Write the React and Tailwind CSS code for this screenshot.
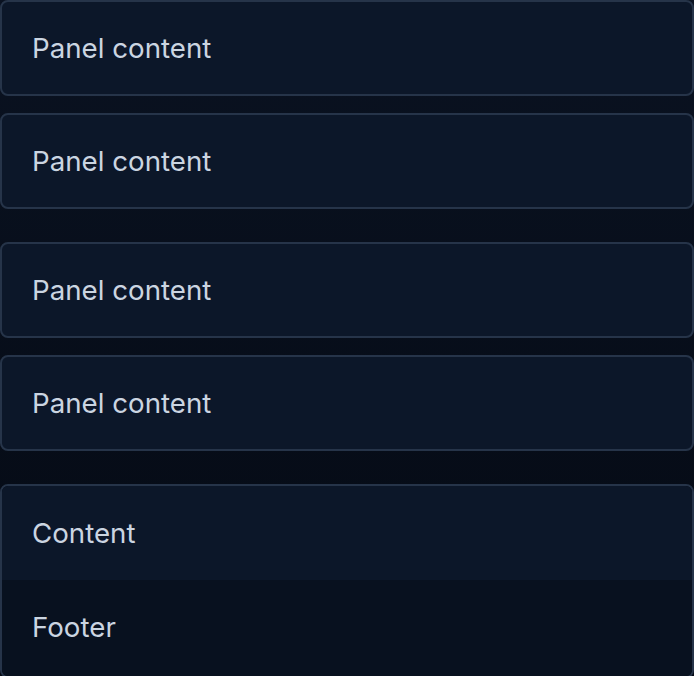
import React from 'react';

const font = { fontFamily: 'Inter, "Noto Sans", sans-serif' };

const Panel = ({ children }) => (
  <div className="h-[96px] flex items-center pt-[2px] px-[30px] rounded-[8px] border-2 border-[#263449] bg-[#0c1729] text-[27.7px] text-[#cbd5e1]">
    {children}
  </div>
);

const Group = () => (
  <div className="flex flex-col gap-[17px]">
    <Panel>Panel content</Panel>
    <Panel>Panel content</Panel>
  </div>
);

export default function App() {
  return (
    <div className="w-[694px] h-[676px] overflow-hidden bg-[#0a1221]" style={font}>
      <div className="flex flex-col gap-[33px] bg-gradient-to-b from-[#0a1221] to-[#050a14]">
        <Group />
        <Group />
        <div className="rounded-[8px] border-2 border-[#263449] overflow-hidden">
          <div className="h-[94px] flex items-center pt-[2px] px-[30px] bg-[#0c1729] text-[27.7px] text-[#cbd5e1]">
            Content
          </div>
          <div className="h-[96px] flex items-center px-[30px] bg-[#08111f] text-[27.7px] text-[#cbd5e1]">
            Footer
          </div>
        </div>
      </div>
    </div>
  );
}
